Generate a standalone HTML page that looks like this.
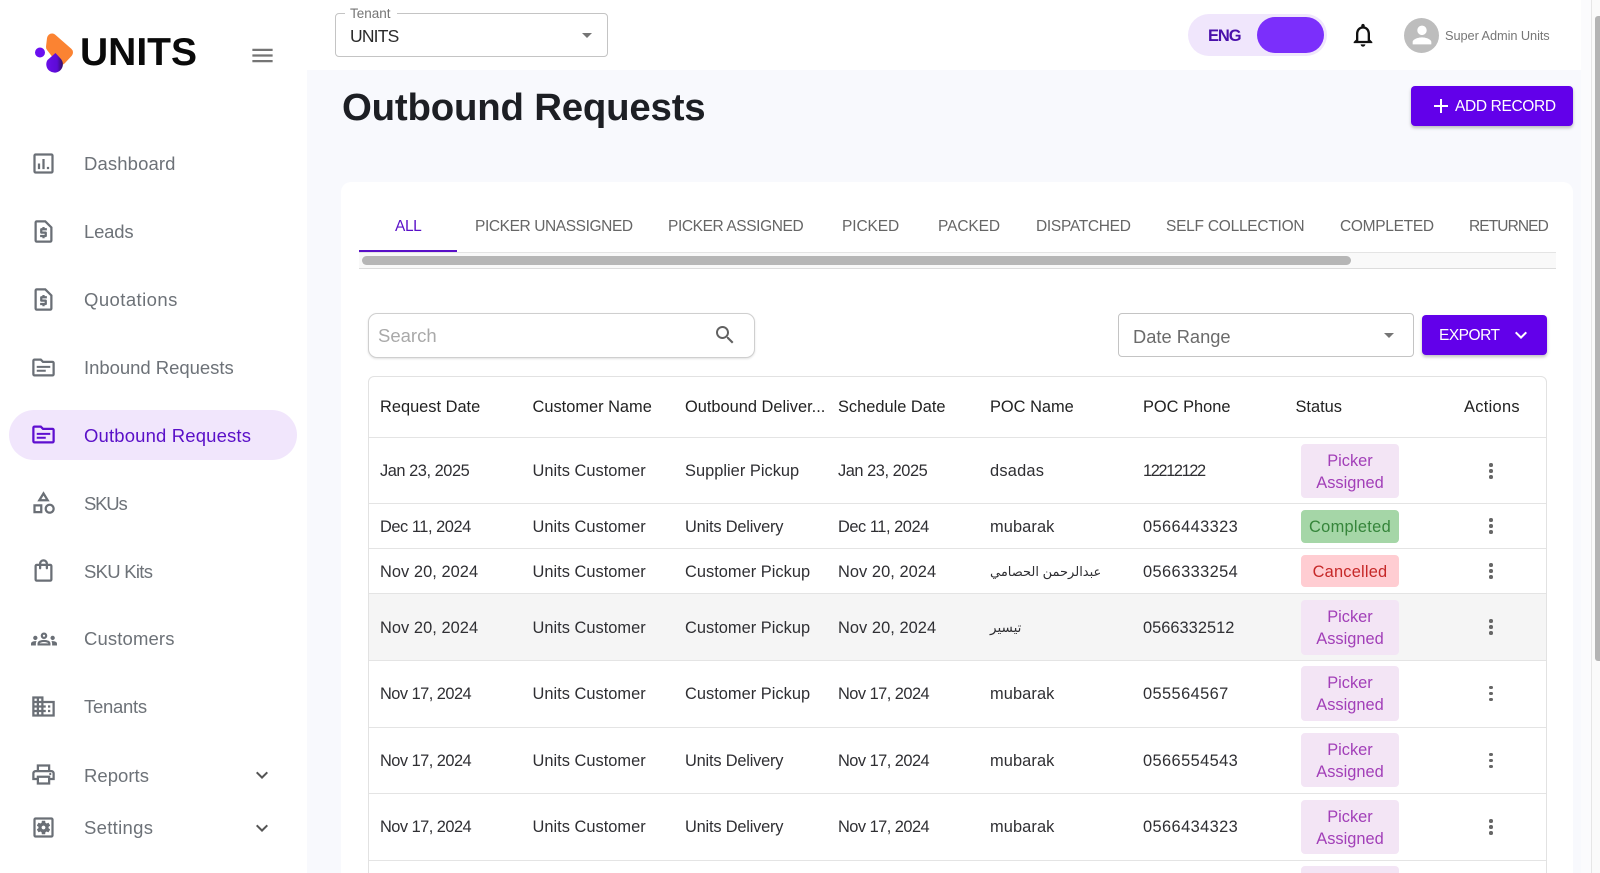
<!DOCTYPE html>
<html lang="en">
<head>
<meta charset="utf-8">
<title>Outbound Requests</title>
<style>
*{box-sizing:border-box}
html,body{margin:0;padding:0;width:1600px;height:873px;overflow:hidden;background:#f8f9fd;font-family:"Liberation Sans","DejaVu Sans",sans-serif}
#page{position:relative;width:1600px;height:873px;overflow:hidden;background:#f8f9fd}
.a{position:absolute;white-space:nowrap}
svg{position:absolute;display:block}
#side{position:absolute;left:0;top:0;width:307px;height:873px;background:#fff}
#head{position:absolute;left:307px;top:0;width:1274px;height:70px;background:#fff}
.ni{position:absolute;left:30px;width:27px;height:27px;margin-top:-2px;fill:#6a6f76}
.nt{position:absolute;left:84px;font-size:18.500px;letter-spacing:.03px;line-height:24px;color:#6d7278;white-space:nowrap}
.tab{position:absolute;top:216px;line-height:22px;font-size:15.500px;letter-spacing:-.4px;color:#666;white-space:nowrap}
.row{position:absolute;left:369px;width:1177px;border-bottom:1px solid #e4e4e4}
.cell{position:absolute;top:0;height:100%;padding-top:2px;display:flex;align-items:center;font-size:16.400px;letter-spacing:.02px;color:#2f2f33;white-space:nowrap}
.th{color:#222;letter-spacing:0;padding-top:0}
.c1{left:11px}.c2{left:163.500px}.c3{left:316px}.c4{left:469px}.c5{left:621px}.c6{left:774px}
.j{letter-spacing:-.46px}.n{letter-spacing:.05px}.s{letter-spacing:-.53px}
.ud{letter-spacing:-.2px}.mu{letter-spacing:.1px}.ph{letter-spacing:.4px}
.chip{position:absolute;left:932px;width:98px;border-radius:4px;text-align:center;font-size:16.400px;line-height:22px;padding-top:1px;display:flex;align-items:center;justify-content:center}
.pa{background:#f3e5f5;color:#a23fb8}
.co{background:#a5d6a7;color:#35853a;letter-spacing:.3px;padding-top:2px}
.ca{background:#ffcdd2;color:#c62828;letter-spacing:.2px;padding-top:2px}
.dots{position:absolute;left:1116px;width:12px;height:18px}
.dots i{position:absolute;left:4.200px;width:3.600px;height:3.600px;border-radius:50%;background:#666}
.dots i:nth-child(1){top:1px}.dots i:nth-child(2){top:7px}.dots i:nth-child(3){top:13px}
</style>
</head>
<body>
<div id="page">
<div id="side">
  <svg style="left:30px;top:28px" width="50" height="50" viewBox="30 28 50 50">
    <defs><linearGradient id="g" x1="0" y1="0" x2="1" y2="0"><stop offset="0" stop-color="#6a0fe8"/><stop offset=".65" stop-color="#5c0bd6"/><stop offset="1" stop-color="#32105f"/></linearGradient></defs>
    <circle cx="40" cy="52.500" r="5" fill="#6a0ff0"/>
    <polygon points="52,38.500 68,52.500 61,60 51,47" fill="#fb8332" stroke="#fb8332" stroke-width="10" stroke-linejoin="round"/>
    <path d="M55.500 53 L60.500 58.500 A8.300 8.300 0 1 1 47.500 60 Z" fill="url(#g)"/>
  </svg>
  <div class="a" style="left:80px;top:31px;font-size:39px;line-height:44px;font-weight:700;color:#0a0a0a">UNITS</div>
  <svg style="left:249px;top:42px;fill:#757575" width="27" height="27" viewBox="0 0 24 24"><path d="M3 18h18v-2H3v2zm0-5h18v-2H3v2zm0-7v2h18V6H3z"/></svg>

  <svg class="ni" style="top:152px" viewBox="0 0 24 24"><path d="M19 3H5c-1.100 0-2 .9-2 2v14c0 1.100.9 2 2 2h14c1.100 0 2-.9 2-2V5c0-1.100-.9-2-2-2zm0 16H5V5h14v14zM7 12h2v5H7zm4-4h2v9h-2zm4 7h2v2h-2z"/></svg>
  <div class="nt" style="top:152px;letter-spacing:.12px">Dashboard</div>

  <svg class="ni" style="top:220px" viewBox="0 0 24 24"><path d="M14 2H6c-1.100 0-1.990.9-1.990 2L4 20c0 1.100.89 2 1.990 2H18c1.100 0 2-.9 2-2V8l-6-6zM6 20V4h7.170L18 8.830V20H6z"/><path d="M15 11h-4v1h3c.55 0 1 .45 1 1v3c0 .55-.45 1-1 1h-1v1h-2v-1H9v-2h4v-1h-3c-.55 0-1-.45-1-1v-3c0-.55.45-1 1-1h1V8h2v1h2v2z"/></svg>
  <div class="nt" style="top:220px;letter-spacing:-.2px">Leads</div>

  <svg class="ni" style="top:288px" viewBox="0 0 24 24"><path d="M14 2H6c-1.100 0-1.990.9-1.990 2L4 20c0 1.100.89 2 1.990 2H18c1.100 0 2-.9 2-2V8l-6-6zM6 20V4h7.170L18 8.830V20H6z"/><path d="M15 11h-4v1h3c.55 0 1 .45 1 1v3c0 .55-.45 1-1 1h-1v1h-2v-1H9v-2h4v-1h-3c-.55 0-1-.45-1-1v-3c0-.55.45-1 1-1h1V8h2v1h2v2z"/></svg>
  <div class="nt" style="top:288px;letter-spacing:.43px">Quotations</div>

  <svg class="ni" style="top:356px" viewBox="0 0 24 24"><path d="M20 6h-8l-2-2H4c-1.100 0-1.990.9-1.990 2L2 18c0 1.100.9 2 2 2h16c1.100 0 2-.9 2-2V8c0-1.100-.9-2-2-2zm0 12H4V6h5.170l1.410 1.410.59.59H20v10z"/><path d="M6 10.500h12v1.800H6zM6 14h8v1.800H6z"/></svg>
  <div class="nt" style="top:356px;letter-spacing:-.03px">Inbound Requests</div>

  <div class="a" style="left:9px;top:410px;width:288px;height:50px;border-radius:25px;background:#f1e6fc"></div>
  <svg class="ni" style="top:423px;fill:#5e0fd0" viewBox="0 0 24 24"><path d="M20 6h-8l-2-2H4c-1.100 0-1.990.9-1.990 2L2 18c0 1.100.9 2 2 2h16c1.100 0 2-.9 2-2V8c0-1.100-.9-2-2-2zm0 12H4V6h5.170l1.410 1.410.59.59H20v10z"/><path d="M6 10.500h12v1.800H6zM6 14h8v1.800H6z"/></svg>
  <div class="nt" style="top:423.500px;color:#5a10c8;letter-spacing:.15px">Outbound Requests</div>

  <svg class="ni" style="top:491px" viewBox="0 0 24 24"><path d="M12 2l-5.500 9h11L12 2zm0 3.840L13.930 9h-3.870L12 5.840zM17.500 13c-2.490 0-4.500 2.010-4.500 4.500s2.010 4.500 4.500 4.500 4.500-2.010 4.500-4.500-2.010-4.500-4.500-4.500zm0 7c-1.380 0-2.500-1.120-2.500-2.500s1.120-2.500 2.500-2.500 2.500 1.120 2.500 2.500-1.120 2.500-2.500 2.500zM3 21.500h8v-8H3v8zm2-6h4v4H5v-4z"/></svg>
  <div class="nt" style="top:491.500px;letter-spacing:-1.200px">SKUs</div>

  <svg class="ni" style="top:559px" viewBox="0 0 24 24"><path d="M18 6h-2c0-2.210-1.790-4-4-4S8 3.790 8 6H6c-1.100 0-2 .9-2 2v12c0 1.100.9 2 2 2h12c1.100 0 2-.9 2-2V8c0-1.100-.9-2-2-2zm-6-2c1.100 0 2 .9 2 2h-4c0-1.100.9-2 2-2zm6 16H6V8h2v2c0 .55.45 1 1 1s1-.45 1-1V8h4v2c0 .55.45 1 1 1s1-.45 1-1V8h2v12z"/></svg>
  <div class="nt" style="top:559.500px;letter-spacing:-.72px">SKU Kits</div>

  <svg class="ni" style="top:626px;left:31px;width:26px;height:26px;margin-top:0" viewBox="0 0 24 24"><path fill-rule="evenodd" d="M12 12.750c1.630 0 3.070.39 4.240.9 1.080.48 1.760 1.560 1.760 2.730V18H6v-1.610c0-1.180.68-2.260 1.760-2.730 1.170-.52 2.610-.91 4.240-.91zM8.070 16h7.870c-.13-.23-.15-.39-.92-.69-.97-.38-1.990-.56-3.020-.56s-2.040.18-3.010.56c-.78.3-.8.46-.92.69zM4 13c1.100 0 2-.9 2-2s-.9-2-2-2-2 .9-2 2 .9 2 2 2zm1.130 1.100c-.37-.06-.74-.1-1.130-.1-.99 0-1.930.21-2.780.58C.48 14.900 0 15.620 0 16.430V18h4.500v-1.610c0-.83.23-1.610.63-2.290zM20 13c1.100 0 2-.9 2-2s-.9-2-2-2-2 .9-2 2 .9 2 2 2zm4 3.430c0-.81-.48-1.530-1.220-1.850-.85-.37-1.790-.58-2.780-.58-.39 0-.76.04-1.130.1.4.68.63 1.460.63 2.290V18H24v-1.570zM12 6c1.660 0 3 1.340 3 3s-1.340 3-3 3-3-1.340-3-3 1.340-3 3-3zm0 2c-.55 0-1 .45-1 1s.45 1 1 1 1-.45 1-1-.45-1-1-1z"/></svg>
  <div class="nt" style="top:627px;letter-spacing:.13px">Customers</div>

  <svg class="ni" style="top:695px" viewBox="0 0 24 24"><path d="M12 7V3H2v18h20V7H12zM6 19H4v-2h2v2zm0-4H4v-2h2v2zm0-4H4V9h2v2zm0-4H4V5h2v2zm4 12H8v-2h2v2zm0-4H8v-2h2v2zm0-4H8V9h2v2zm0-4H8V5h2v2zm10 12h-8v-2h2v-2h-2v-2h2v-2h-2V9h8v10zm-2-8h-2v2h2v-2zm0 4h-2v2h2v-2z"/></svg>
  <div class="nt" style="top:695px;letter-spacing:-.27px">Tenants</div>

  <svg class="ni" style="top:763px" viewBox="0 0 24 24"><path d="M19 8h-1V3H6v5H5c-1.660 0-3 1.340-3 3v6h4v4h12v-4h4v-6c0-1.660-1.340-3-3-3zM8 5h8v3H8V5zm8 12v2H8v-4h8v2zm2-2v-2H6v2H4v-4c0-.55.45-1 1-1h14c.55 0 1 .45 1 1v4h-2z"/><circle cx="18" cy="11.500" r="1"/></svg>
  <div class="nt" style="top:763.500px">Reports</div>
  <svg style="left:250px;top:763px;fill:#555" width="24" height="24" viewBox="0 0 24 24"><path d="M16.590 8.590L12 13.170 7.410 8.590 6 10l6 6 6-6z"/></svg>

  <svg class="ni" style="top:816px" viewBox="0 0 24 24"><path fill-rule="evenodd" d="M6.210 13.970l1.200 2.070c.08.13.23.18.37.13l1.490-.6c.31.24.64.44 1.010.59l.22 1.590c.03.14.15.25.3.25h2.400c.15 0 .27-.11.3-.25l.22-1.590c.36-.15.7-.35 1.010-.59l1.490.6c.14.05.29 0 .37-.13l1.200-2.070c.08-.13.04-.29-.07-.39l-1.270-.99c.03-.19.04-.39.04-.58 0-.2-.02-.39-.04-.59l1.270-.99c.11-.09.15-.26.07-.39l-1.200-2.070c-.08-.13-.23-.18-.37-.13l-1.490.6c-.31-.24-.64-.44-1.010-.59l-.22-1.590c-.03-.14-.15-.25-.3-.25h-2.400c-.15 0-.27.11-.3.25l-.22 1.590c-.36.15-.71.34-1.010.58l-1.490-.6c-.14-.05-.29 0-.37.13l-1.200 2.070c-.08.13-.04.29.07.39l1.270.99c-.03.2-.05.39-.05.59 0 .2.02.39.04.59l-1.270.99c-.11.1-.14.26-.06.39zM12 10.290c.94 0 1.710.77 1.710 1.710s-.77 1.710-1.710 1.710-1.710-.77-1.710-1.710.77-1.710 1.710-1.710zM19 3H5c-1.110 0-2 .9-2 2v14c0 1.100.89 2 2 2h14c1.110 0 2-.9 2-2V5c0-1.100-.89-2-2-2zm0 16H5V5h14v14z"/></svg>
  <div class="nt" style="top:816px;letter-spacing:.3px">Settings</div>
  <svg style="left:250px;top:816px;fill:#555" width="24" height="24" viewBox="0 0 24 24"><path d="M16.590 8.590L12 13.170 7.410 8.590 6 10l6 6 6-6z"/></svg>
</div>

<div id="head"></div>
<div class="a" style="left:335px;top:13px;width:273px;height:44px;border:1px solid #c4c4c4;border-radius:4px;background:#fff"></div>
<div class="a" style="left:345px;top:10px;background:#fff;padding:0 6px 0 5px;font-size:13.500px;line-height:8px;color:#757575;height:8px">Tenant</div>
<div class="a" style="left:350px;top:24px;font-size:17.500px;letter-spacing:-.8px;line-height:24px;color:#2b2b2b">UNITS</div>
<svg style="left:575px;top:23px;fill:#757575" width="24" height="24" viewBox="0 0 24 24"><path d="M7 10l5 5 5-5z"/></svg>

<div class="a" style="left:1188px;top:14px;width:139px;height:42px;border-radius:21px;background:#f0e6fc"></div>
<div class="a" style="left:1257px;top:17px;width:67px;height:36px;border-radius:18px;background:#7b2ffb"></div>
<div class="a" style="left:1208px;top:24px;font-size:16.500px;letter-spacing:-1.100px;line-height:24px;font-weight:700;color:#4a10ab">ENG</div>
<svg style="left:1349px;top:21px;fill:#111" width="28" height="28" viewBox="0 0 24 24"><path d="M12 22c1.100 0 2-.9 2-2h-4c0 1.100.9 2 2 2zm6-6v-5c0-3.070-1.630-5.640-4.500-6.320V4c0-.83-.67-1.500-1.500-1.500s-1.500.67-1.500 1.500v.68C7.640 5.360 6 7.920 6 11v5l-2 2v1h16v-1l-2-2zm-2 1H8v-6c0-2.480 1.510-4.500 4-4.500s4 2.020 4 4.500v6z"/></svg>
<div class="a" style="left:1404px;top:18px;width:35px;height:35px;border-radius:50%;background:#bdbdbd"></div>
<svg style="left:1408px;top:21px;fill:#fff" width="28" height="28" viewBox="0 0 24 24"><path d="M12 12c2.210 0 4-1.790 4-4s-1.790-4-4-4-4 1.790-4 4 1.790 4 4 4zm0 2c-2.670 0-8 1.340-8 4v2h16v-2c0-2.660-5.330-4-8-4z"/></svg>
<div class="a" style="left:1445px;top:27px;font-size:12.800px;line-height:18px;letter-spacing:-.08px;color:#777">Super Admin Units</div>

<div class="a" style="left:342px;top:85px;font-size:38.400px;line-height:46px;font-weight:700;letter-spacing:-.2px;color:#1d1f24">Outbound Requests</div>
<div class="a" style="left:1411px;top:86px;width:162px;height:40px;border-radius:4px;background:#6200ea;box-shadow:0 2px 3px rgba(0,0,0,.25)"></div>
<svg style="left:1429px;top:94px;fill:#fff" width="24" height="24" viewBox="0 0 24 24"><path d="M19 13h-6v6h-2v-6H5v-2h6V5h2v6h6v2z"/></svg>
<div class="a" style="left:1455px;top:95.500px;font-size:15.500px;letter-spacing:-.35px;line-height:22px;color:#fff">ADD RECORD</div>

<div class="a" style="left:341px;top:182px;width:1232px;height:700px;border-radius:10px;background:#fff"></div>
<div class="tab" style="left:395px;color:#5a10c8">ALL</div>
<div class="tab" style="left:475px">PICKER UNASSIGNED</div>
<div class="tab" style="left:668px">PICKER ASSIGNED</div>
<div class="tab" style="left:842px;letter-spacing:-.1px">PICKED</div>
<div class="tab" style="left:938px;letter-spacing:-.1px">PACKED</div>
<div class="tab" style="left:1036px;letter-spacing:-.3px">DISPATCHED</div>
<div class="tab" style="left:1166px;letter-spacing:-.25px">SELF COLLECTION</div>
<div class="tab" style="left:1340px;letter-spacing:-.3px">COMPLETED</div>
<div class="tab" style="left:1469px;letter-spacing:-.9px">RETURNED</div>
<div class="a" style="left:359px;top:252px;width:1197px;height:17px;background:#f9f9f9;border-top:1px solid #e4e4e4;border-bottom:1px solid #dcdcdc"></div>
<div class="a" style="left:359px;top:250px;width:98px;height:2px;background:#5a10c8"></div>
<div class="a" style="left:362px;top:256px;width:989px;height:9px;border-radius:5px;background:#b6b6b6"></div>

<div class="a" style="left:368px;top:313px;width:387px;height:45px;border:1px solid #cfcfcf;border-radius:9px;background:#fff;box-shadow:0 1px 2px rgba(0,0,0,.12)"></div>
<div class="a" style="left:378px;top:324px;font-size:18.500px;line-height:24px;color:#a9a9a9">Search</div>
<svg style="left:713px;top:323px;fill:#616161" width="24" height="24" viewBox="0 0 24 24"><path d="M15.500 14h-.79l-.28-.27C15.410 12.590 16 11.110 16 9.500 16 5.910 13.090 3 9.500 3S3 5.910 3 9.500 5.910 16 9.500 16c1.610 0 3.090-.59 4.230-1.570l.27.28v.79l5 4.990L20.490 19l-4.990-5zm-6 0C7.010 14 5 11.990 5 9.500S7.010 5 9.500 5 14 7.010 14 9.500 11.990 14 9.500 14z"/></svg>

<div class="a" style="left:1118px;top:313px;width:296px;height:44px;border:1px solid #c4c4c4;border-radius:4px;background:#fff"></div>
<div class="a" style="left:1133px;top:325px;font-size:18.300px;line-height:24px;color:#6b6b6b">Date Range</div>
<svg style="left:1377px;top:323px;fill:#757575" width="24" height="24" viewBox="0 0 24 24"><path d="M7 10l5 5 5-5z"/></svg>
<div class="a" style="left:1422px;top:315px;width:125px;height:40px;border-radius:4px;background:#6200ea;box-shadow:0 2px 3px rgba(0,0,0,.25)"></div>
<div class="a" style="left:1439px;top:325px;font-size:15.500px;letter-spacing:-.5px;line-height:22px;color:#fff">EXPORT</div>
<svg style="left:1509px;top:323px;fill:#fff" width="24" height="24" viewBox="0 0 24 24"><path d="M16.590 8.590L12 13.170 7.410 8.590 6 10l6 6 6-6z"/></svg>

<div class="a" style="left:368px;top:376px;width:1179px;height:520px;border:1px solid #e2e2e2;border-radius:6px;background:#fff"></div>

<div class="row" style="top:377px;height:61px">
  <div class="cell th c1">Request Date</div><div class="cell th c2">Customer Name</div><div class="cell th c3">Outbound Deliver...</div><div class="cell th c4">Schedule Date</div><div class="cell th c5">POC Name</div><div class="cell th c6">POC Phone</div><div class="cell th" style="left:926.500px">Status</div><div class="cell th" style="left:1095px;letter-spacing:.3px">Actions</div>
</div>

<div class="row" style="top:438px;height:66px">
  <div class="cell c1 j">Jan 23, 2025</div><div class="cell c2">Units Customer</div><div class="cell c3">Supplier Pickup</div><div class="cell c4 j">Jan 23, 2025</div><div class="cell c5" style="letter-spacing:.22px">dsadas</div><div class="cell c6" style="letter-spacing:-1.400px">12212122</div>
  <div class="chip pa" style="top:6px;height:54px">Picker<br>Assigned</div><div class="dots" style="top:24px"><i></i><i></i><i></i></div>
</div>
<div class="row" style="top:504px;height:45px">
  <div class="cell c1 j">Dec 11, 2024</div><div class="cell c2">Units Customer</div><div class="cell c3 ud">Units Delivery</div><div class="cell c4 j">Dec 11, 2024</div><div class="cell c5 mu">mubarak</div><div class="cell c6 ph">0566443323</div>
  <div class="chip co" style="top:5.500px;height:33px">Completed</div><div class="dots" style="top:13px"><i></i><i></i><i></i></div>
</div>
<div class="row" style="top:549px;height:45px">
  <div class="cell c1 n">Nov 20, 2024</div><div class="cell c2">Units Customer</div><div class="cell c3">Customer Pickup</div><div class="cell c4 n">Nov 20, 2024</div><div class="cell c5" style="font-size:13px;letter-spacing:-.1px" dir="rtl">عبدالرحمن الحصامي</div><div class="cell c6 ph">0566333254</div>
  <div class="chip ca" style="top:6px;height:32px">Cancelled</div><div class="dots" style="top:13px"><i></i><i></i><i></i></div>
</div>
<div class="row" style="top:594px;height:67px;background:#f5f5f5">
  <div class="cell c1 n">Nov 20, 2024</div><div class="cell c2">Units Customer</div><div class="cell c3">Customer Pickup</div><div class="cell c4 n">Nov 20, 2024</div><div class="cell c5" style="font-size:13.500px;letter-spacing:-.1px" dir="rtl">تيسير</div><div class="cell c6">0566332512</div>
  <div class="chip pa" style="top:5.500px;height:55px">Picker<br>Assigned</div><div class="dots" style="top:24px"><i></i><i></i><i></i></div>
</div>
<div class="row" style="top:661px;height:67px">
  <div class="cell c1 s" style="padding-top:0">Nov 17, 2024</div><div class="cell c2" style="padding-top:0">Units Customer</div><div class="cell c3" style="padding-top:0">Customer Pickup</div><div class="cell c4 s" style="padding-top:0">Nov 17, 2024</div><div class="cell c5 mu" style="padding-top:0">mubarak</div><div class="cell c6 ph" style="padding-top:0">055564567</div>
  <div class="chip pa" style="top:4.500px;height:55px">Picker<br>Assigned</div><div class="dots" style="top:23.500px"><i></i><i></i><i></i></div>
</div>
<div class="row" style="top:728px;height:66px">
  <div class="cell c1 s">Nov 17, 2024</div><div class="cell c2">Units Customer</div><div class="cell c3 ud">Units Delivery</div><div class="cell c4 s">Nov 17, 2024</div><div class="cell c5 mu">mubarak</div><div class="cell c6 ph">0566554543</div>
  <div class="chip pa" style="top:5px;height:54px">Picker<br>Assigned</div><div class="dots" style="top:23.500px"><i></i><i></i><i></i></div>
</div>
<div class="row" style="top:794px;height:67px">
  <div class="cell c1 s" style="padding-top:1px">Nov 17, 2024</div><div class="cell c2" style="padding-top:1px">Units Customer</div><div class="cell c3 ud" style="padding-top:1px">Units Delivery</div><div class="cell c4 s" style="padding-top:1px">Nov 17, 2024</div><div class="cell c5 mu" style="padding-top:1px">mubarak</div><div class="cell c6 ph" style="padding-top:1px">0566434323</div>
  <div class="chip pa" style="top:6px;height:54px">Picker<br>Assigned</div><div class="dots" style="top:24px"><i></i><i></i><i></i></div>
</div>
<div class="a" style="left:1301px;top:866px;width:98px;height:20px;border-radius:4px;background:#f3e5f5"></div>

<div class="a" style="left:1581px;top:0;width:10px;height:873px;background:#fbfbfd"></div>
<div class="a" style="left:1591px;top:0;width:1px;height:873px;background:#e6e6e6"></div>
<div class="a" style="left:1592px;top:0;width:8px;height:873px;background:#fafafa"></div>
<div class="a" style="left:1595px;top:16px;width:5px;height:645px;border-radius:3px 0 0 3px;background:#b4b4b4"></div>
</div>
</body>
</html>
